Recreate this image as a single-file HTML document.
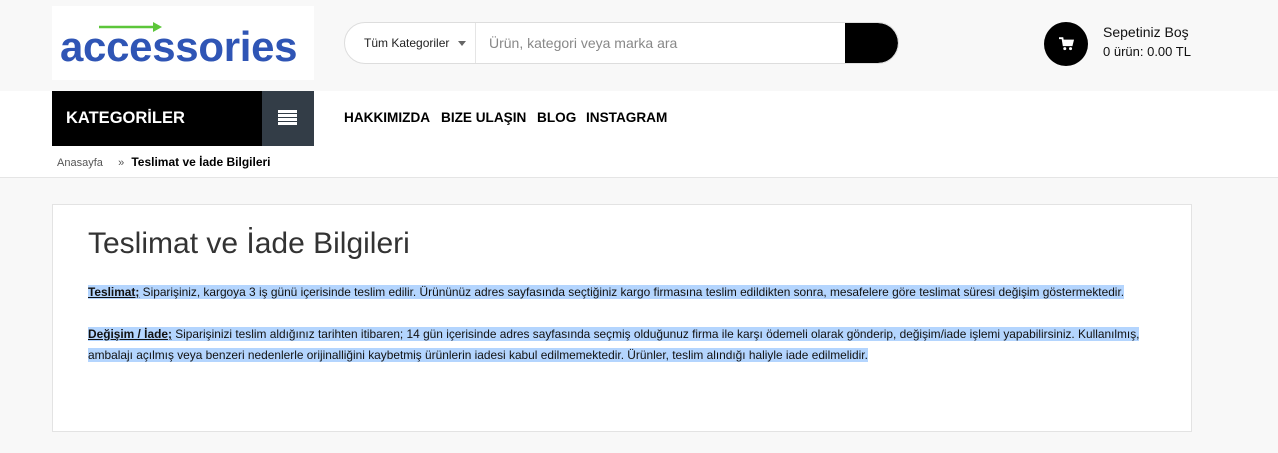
<!DOCTYPE html>
<html><head><meta charset="utf-8"><style>
*{margin:0;padding:0;box-sizing:border-box}
body{width:1278px;height:453px;background:#f8f8f8;font-family:"Liberation Sans",sans-serif;position:relative;overflow:hidden}
.abs{position:absolute}
.logo{left:52px;top:6px;width:262px;height:74px;background:#fff}
.logo span{position:absolute;left:8px;top:17px;font:bold 42px "Liberation Sans",sans-serif;color:#2f55b5;letter-spacing:-0.3px}
.search{left:344px;top:22px;width:555px;height:42px;border:1px solid #ddd;border-radius:21px;background:#fff;overflow:hidden}
.search .cat{position:absolute;left:0;top:0;width:131px;height:40px;border-right:1px solid #e5e5e5;font-size:12px;color:#222;line-height:40px;padding-left:19px}
.search .cat:after{content:"";position:absolute;right:9px;top:18px;border:4px solid transparent;border-top:5px solid #666}
.search .ph{position:absolute;left:144px;top:0;line-height:40px;font-size:14px;color:#888}
.search .btn{position:absolute;right:0;top:0;width:53px;height:40px;background:#000;border-radius:0 21px 21px 0}
.cart{left:1044px;top:22px;width:44px;height:44px;border-radius:50%;background:#000}
.carttxt{left:1103px;top:23px;font-size:14px;color:#111;line-height:19px}
.carttxt div+div{font-size:13px}
.nav{left:0;top:91px;width:1278px;height:87px;background:#fff;border-bottom:1px solid #e5e5e5}
.kat{left:52px;top:91px;width:210px;height:55px;background:#000;color:#fff;font-weight:bold;font-size:16.5px;line-height:54px;padding-left:14px}
.menu{left:262px;top:91px;width:52px;height:55px;background:#333d47}
.menu i{position:absolute;left:16px;width:19px;height:3px;background:#fff}
.lk{top:110px;font-weight:bold;font-size:13.6px;color:#000}
.bc{left:57px;top:155px;font-size:11px;color:#555}
.bc b{color:#000;font-size:12px;margin-left:4px}
.box{left:52px;top:204px;width:1140px;height:228px;background:#fff;border:1px solid #e3e3e3}
h1{position:absolute;left:35px;top:22px;font-weight:normal;font-size:30px;color:#333}
.txt{position:absolute;left:35px;top:77px;width:1075px;font:11.9px/21px "Liberation Sans",sans-serif;color:#111}
.txt span{background:#b4d5fe}
.txt b{text-decoration:underline}
</style></head><body>
<div class="abs logo"><svg class="abs" style="left:47px;top:15px" width="64" height="12"><line x1="0" y1="6" x2="56" y2="6" stroke="#5cc63a" stroke-width="2.5"/><polygon points="54,1 63,6 54,11" fill="#5cc63a"/></svg><span>accessories</span></div>
<div class="abs search"><div class="cat">Tüm Kategoriler</div><div class="ph">Ürün, kategori veya marka ara</div><div class="btn"></div></div>
<div class="abs cart"><svg class="abs" style="left:15px;top:15px" width="15" height="14" viewBox="0 0 13 12"><path d="M0 1h3l1 6h7l1-4H3.5" fill="none" stroke="#fff" stroke-width="1.6"/><path d="M3.5 3h8.5l-1 4H4z" fill="#fff"/><circle cx="5" cy="10" r="1.3" fill="#fff"/><circle cx="10" cy="10" r="1.3" fill="#fff"/></svg></div>
<div class="abs carttxt"><div>Sepetiniz Boş</div><div>0 ürün: 0.00 TL</div></div>
<div class="abs nav"></div>
<div class="abs kat">KATEGORİLER</div>
<div class="abs menu"><i style="top:19px"></i><i style="top:23px"></i><i style="top:27px"></i><i style="top:31px"></i></div>
<div class="abs lk" style="left:344px">HAKKIMIZDA</div>
<div class="abs lk" style="left:441px">BIZE ULAŞIN</div>
<div class="abs lk" style="left:537px">BLOG</div>
<div class="abs lk" style="left:586px">INSTAGRAM</div>
<div class="abs bc">Anasayfa &nbsp;&nbsp;&nbsp; » <b>Teslimat ve İade Bilgileri</b></div>
<div class="abs box">
<h1>Teslimat ve İade Bilgileri</h1>
<div class="txt"><span><b>Teslimat;</b> Siparişiniz, kargoya 3 iş günü içerisinde teslim edilir. Ürününüz adres sayfasında seçtiğiniz kargo firmasına teslim edildikten sonra, mesafelere göre teslimat süresi değişim göstermektedir. </span><br><br><span><b>Değişim / İade;</b> Siparişinizi teslim aldığınız tarihten itibaren; 14 gün içerisinde adres sayfasında seçmiş olduğunuz firma ile karşı ödemeli olarak gönderip, değişim/iade işlemi yapabilirsiniz. Kullanılmış, ambalajı açılmış veya benzeri nedenlerle orijinalliğini kaybetmiş ürünlerin iadesi kabul edilmemektedir. Ürünler, teslim alındığı haliyle iade edilmelidir. </span></div>
</div>
</body></html>
